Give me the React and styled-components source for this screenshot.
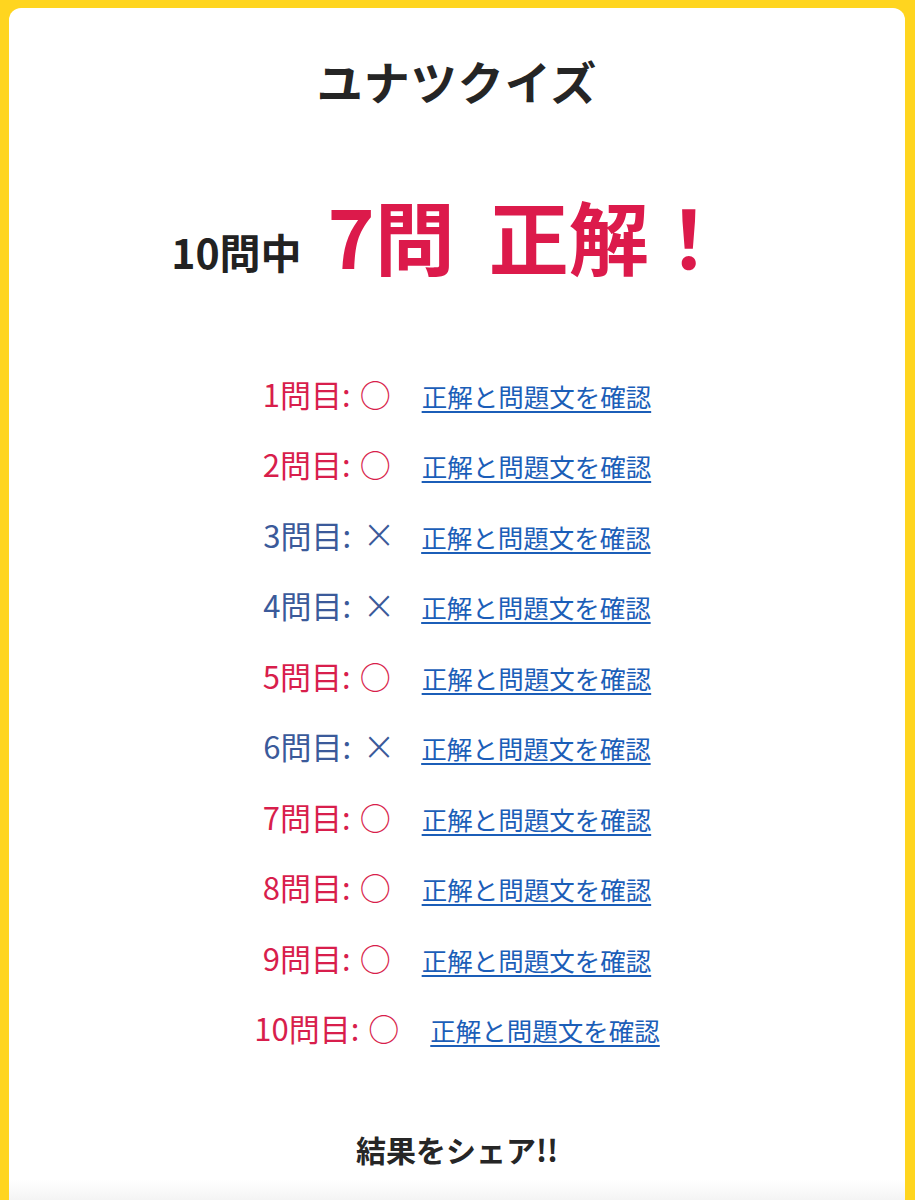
import React from "react";
import styled, { createGlobalStyle } from "styled-components";

const GlobalStyle = createGlobalStyle`
  html, body {
    margin: 0;
    padding: 0;
    background: #ffd51f;
  }
  body {
    font-family: "Noto Sans CJK JP", "Noto Sans", sans-serif;
    padding: 8px 10px 0 9px;
  }
`;

const Card = styled.main`
  background: #fff;
  border-radius: 12px 12px 0 0;
  height: 1192px;
  padding-top: 40px;
  box-sizing: border-box;
  display: flex;
  flex-direction: column;
  align-items: center;
  overflow: hidden;
`;

const Title = styled.h1`
  margin: 0;
  font-size: 46px;
  line-height: 64px;
  font-weight: 700;
  color: #252525;
  letter-spacing: 1px;
`;

const Score = styled.div`
  margin-top: 76px;
  display: flex;
  align-items: baseline;
  gap: 26px;
  line-height: 92px;
  padding-right: 14px;
`;

const Total = styled.span`
  font-size: 41px;
  font-weight: 700;
  color: #222;
`;

const Big = styled.span`
  font-size: 80px;
  font-weight: 700;
  color: #dc1a4b;
  margin-right: ${(p) => p.$space || 0}px;
`;

const List = styled.ul`
  list-style: none;
  margin: 50px 0 0;
  padding: 0;
  display: flex;
  flex-direction: column;
  align-items: center;
`;

const Row = styled.li`
  height: 70.5px;
  display: flex;
  align-items: center;
  gap: 31px;
`;

const Label = styled.span`
  font-size: 31px;
  color: ${(p) => (p.$ok ? "#d81e4c" : "#3b5a9a")};
  white-space: nowrap;
  display: flex;
  align-items: center;
`;

const Mark = styled.span`
  display: inline-block;
  margin-left: ${(p) => (p.$ok ? 9 : 11)}px;
  width: ${(p) => (p.$ok ? 31 : 28)}px;
  text-align: center;
  font-family: ${(p) => (p.$ok ? `"Noto Sans CJK JP"` : `"DejaVu Sans"`)}, sans-serif;
  font-size: ${(p) => (p.$ok ? "31px" : "40px")};
  font-weight: ${(p) => (p.$ok ? 400 : 200)};
`;

const Link = styled.a`
  font-size: 25.5px;
  color: #1b5eb8;
  text-decoration: underline;
  text-underline-offset: 4px;
  text-decoration-thickness: 2px;
  margin-top: 4px;
  cursor: pointer;
`;

const Share = styled.h2`
  margin: 64px 0 0;
  font-size: 30px;
  line-height: 45px;
  font-weight: 700;
  color: #262626;
`;

const ShareBox = styled.div`
  margin-top: 8px;
  width: 100%;
  flex: 1;
  background: linear-gradient(to bottom, #fff, #f4f4f4);
`;

const results = [true, true, false, false, true, false, true, true, true, true];

export default function App() {
  return (
    <>
      <GlobalStyle />
      <Card>
        <Title>ユナツクイズ</Title>
        <Score>
          <Total>10問中</Total>
          <span>
            <Big $space={34}>7問</Big>
            <Big>正解！</Big>
          </span>
        </Score>
        <List>
          {results.map((ok, i) => (
            <Row key={i}>
              <Label $ok={ok}>
                {i + 1}問目:
                <Mark $ok={ok}>{ok ? "○" : "×"}</Mark>
              </Label>
              <Link>正解と問題文を確認</Link>
            </Row>
          ))}
        </List>
        <Share>結果をシェア!!</Share>
        <ShareBox />
      </Card>
    </>
  );
}
